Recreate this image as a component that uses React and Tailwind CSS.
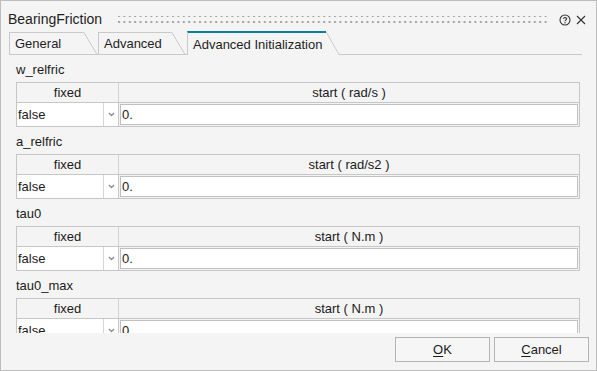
import React from 'react';

const sections = [
  { name: 'w_relfric', unit: 'rad/s' },
  { name: 'a_relfric', unit: 'rad/s2' },
  { name: 'tau0', unit: 'N.m' },
  { name: 'tau0_max', unit: 'N.m' },
];

const Tab = ({ label, width, active }) => (
  <div className={`flex h-[23px] ${active ? 'h-[24px]' : 'border-b border-[#c9c9c9]'}`}>
    <div
      className={`flex items-center pl-[5px] border-l border-[#c9c9c9] text-[13px] text-[#1e1e1e] ${
        active ? 'border-t-2 border-t-[#0a7ca6] pt-[1px]' : 'border-t pt-[1px]'
      }`}
      style={{ width }}
    >
      {label}
    </div>
    <svg width="13" height={active ? 24 : 23} className="block shrink-0">
      <line x1="0" y1="0.5" x2="13" y2={active ? 23.5 : 22.5} stroke="#c9c9c9" strokeWidth="1" />
    </svg>
  </div>
);

const ParamTable = ({ name, unit }) => (
  <div className="flex flex-col shrink-0">
    <div className="h-[27px] flex items-center pt-[3px] text-[13px] text-[#1b1b1b]">{name}</div>
    <div className="flex h-[21px] border border-[#c6c6c6] bg-[#f4f4f4] text-[13px] text-[#1b1b1b]">
      <div className="w-[102px] border-r border-[#d2d2d2] flex items-center justify-center">fixed</div>
      <div className="flex-1 flex items-center justify-center">start ( {unit} )</div>
    </div>
    <div className="flex h-[24px] border-x border-b border-[#c6c6c6] text-[13px] text-[#1b1b1b]">
      <div className="w-[102px] bg-white border-r border-[#c6c6c6] flex">
        <div className="flex-1 flex items-center pl-[1px]">false</div>
        <div className="w-[15px] border-l border-[#d6d6d6] flex items-center justify-center">
          <svg width="7" height="5" viewBox="0 0 7 5">
            <path d="M1 1 L3.5 3.5 L6 1" fill="none" stroke="#8a8a8a" strokeWidth="1.3" />
          </svg>
        </div>
      </div>
      <div className="flex-1 p-px">
        <div className="h-full bg-white border border-[#c0c0c0] flex items-center pl-[1px]">0.</div>
      </div>
    </div>
  </div>
);

export default function App() {
  return (
    <div
      className="w-[597px] h-[371px] border border-[#bdbdbd] bg-[#f4f4f4] flex flex-col overflow-hidden"
      style={{ fontFamily: '"Liberation Sans", Arial, sans-serif' }}
    >
      <div className="h-[30px] flex items-center pt-[7px] pl-[7px] pr-[10px] shrink-0">
        <span className="text-[14px] text-[#1e1e1e]">BearingFriction</span>
        <svg className="ml-[16px] flex-1" height="9">
          <defs>
            <pattern id="grip" width="5.4" height="6" patternUnits="userSpaceOnUse">
              <rect x="0" y="0" width="2" height="2" fill="#a3a3a3" />
            </pattern>
          </defs>
          <rect x="0" y="1" width="100%" height="8" fill="url(#grip)" />
        </svg>
        <svg width="12" height="12" viewBox="0 0 12 12" className="ml-[11px]">
          <circle cx="6" cy="6" r="5" fill="none" stroke="#333" strokeWidth="1.1" />
          <path d="M4.3 4.7 C4.3 3.2 7.7 3.2 7.7 4.8 C7.7 5.9 6 5.9 6 7.2" fill="none" stroke="#333" strokeWidth="1.1" />
          <rect x="5.4" y="8.2" width="1.2" height="1.2" fill="#333" />
        </svg>
        <svg width="10" height="10" viewBox="0 0 10 10" className="ml-[5px]">
          <path d="M1 1 L9 9 M9 1 L1 9" stroke="#333" strokeWidth="1.1" />
        </svg>
      </div>

      <div className="flex items-end h-[24px] pl-[8px] pr-[14px] shrink-0">
        <Tab label="General" width={75} />
        <div className="w-px h-[23px] border-b border-[#c9c9c9]" />
        <Tab label="Advanced" width={74} />
        <div className="w-[2px] h-[23px] border-b border-[#c9c9c9]" />
        <Tab label="Advanced Initialization" width={139} active />
        <div className="flex-1 h-[23px] border-b border-[#c9c9c9]" />
      </div>

      <div className="h-[278px] overflow-hidden pl-[15px] pr-[16px] flex flex-col shrink-0">
        {sections.map((s) => (
          <ParamTable key={s.name} name={s.name} unit={s.unit} />
        ))}
      </div>

      <div className="flex justify-end gap-[4px] pt-[4px] pr-[7px]">
        <button className="w-[95px] h-[25px] border border-[#b4b4b4] bg-[#f6f6f6] text-[13px] text-[#1b1b1b]">
          <span className="underline underline-offset-2">O</span>K
        </button>
        <button className="w-[95px] h-[25px] border border-[#b4b4b4] bg-[#f6f6f6] text-[13px] text-[#1b1b1b]">
          <span className="underline underline-offset-2">C</span>ancel
        </button>
      </div>
    </div>
  );
}
